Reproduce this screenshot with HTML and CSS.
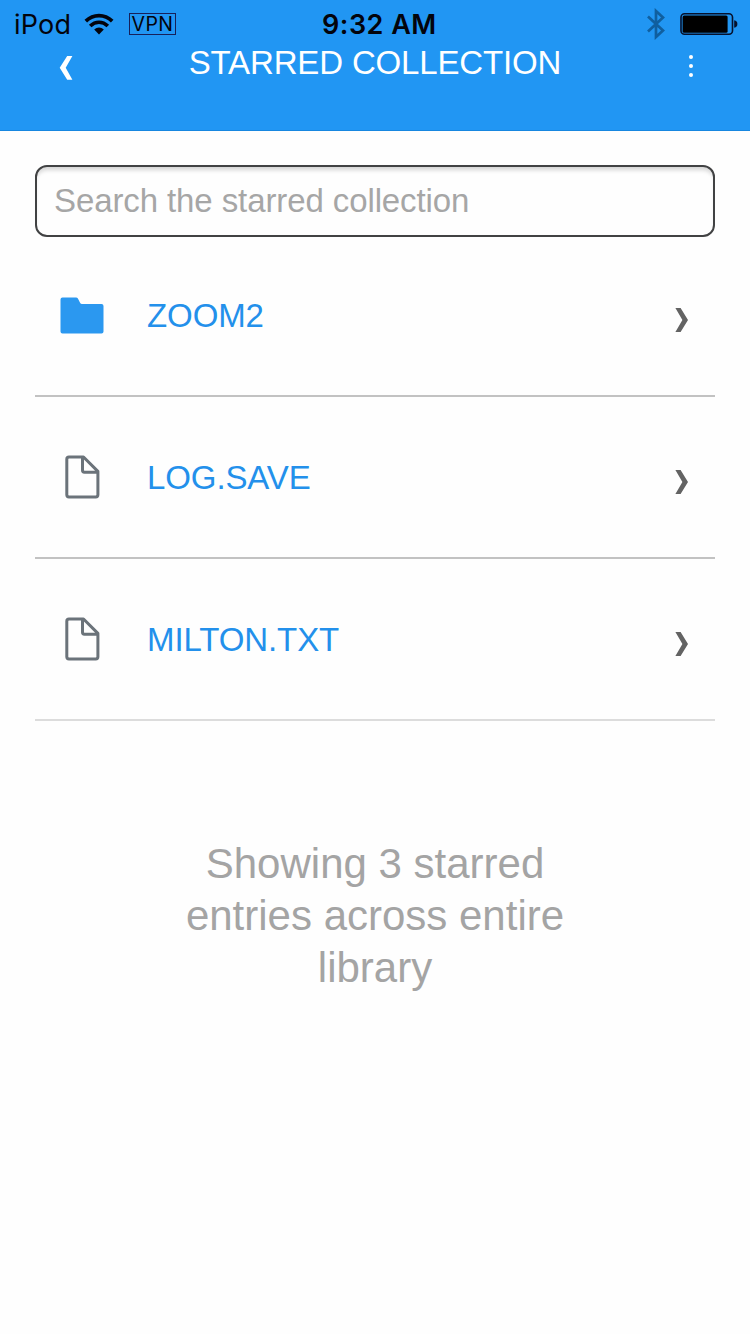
FILE: index.html
```html
<!DOCTYPE html>
<html lang="en">
<head>
<meta charset="utf-8">
<title>Starred Collection</title>
<link rel="stylesheet" href="styles.css">
</head>
<body>
<header class="header">
  <div class="status">
    <div class="status-left">
      <span class="carrier">iPod</span>
      <svg class="wifi" width="30" height="22" viewBox="0 0 30 22">
        <path d="M1.8 8.2C9.4.8 20.6.8 28.2 8.2" fill="none" stroke="#03040c" stroke-width="3.7"/>
        <path d="M6.2 13C11.4 8 18.6 8 23.8 13" fill="none" stroke="#03040c" stroke-width="3.7"/>
        <path d="M10.2 16.6C13 13.9 17 13.9 19.8 16.6L15 21.4Z" fill="#03040c"/>
      </svg>
      <span class="vpn">VPN</span>
    </div>
    <span class="time">9:32 AM</span>
    <div class="status-right">
      <svg class="bluetooth" width="18" height="32" viewBox="0 0 18 32">
        <path d="M1 8.5L16 22.5L9 29V3L16 9.5L1 23.5" fill="none" stroke="#105f9f" stroke-width="2.7"/>
      </svg>
      <svg class="battery" width="58" height="24" viewBox="0 0 58 24">
        <rect x="1" y="1.7" width="51.5" height="20.6" rx="3.5" fill="none" stroke="#06112c" stroke-width="1.6"/>
        <rect x="2.6" y="3.4" width="45" height="17.4" rx="1.5" fill="#000"/>
        <path d="M54.2 8.2Q57.4 8.8 57.4 12T54.2 15.8Z" fill="#06112c"/>
      </svg>
    </div>
  </div>
  <div class="titlebar">
    <svg class="back" width="14" height="26" viewBox="0 0 14 26"><path d="M8.2.9H13.4L6.7 12.7L13.4 24.7H8.2L.7 12.7Z" fill="#fff"/></svg>
    <h1 class="title">STARRED COLLECTION</h1>
    <svg class="more" width="6" height="24" viewBox="0 0 6 24" fill="#fff"><circle cx="3" cy="3" r="2"/><circle cx="3" cy="12" r="2"/><circle cx="3" cy="21" r="2"/></svg>
  </div>
</header>
<main class="content">
  <input class="search" type="text" placeholder="Search the starred collection">
  <ul class="entries">
    <li class="entry">
      <svg class="icon" width="48" height="48" viewBox="0 0 48 48"><path d="M4.5 5.5H18Q19.3 5.5 19.9 6.5L22.2 10.9Q22.8 12 24 12H43.5Q45.5 12 45.5 14V39.5Q45.5 41.5 43.5 41.5H4.5Q2.5 41.5 2.5 39.5V7.5Q2.5 5.5 4.5 5.5Z" fill="#2b98f0"/></svg>
      <span class="name">ZOOM2</span>
      <svg class="chevron" width="14" height="26" viewBox="0 0 14 26"><path d="M.4 1H5.6L13 13L5.6 25H.4L7.4 13Z" fill="#636363"/></svg>
    </li>
    <li class="entry">
      <svg class="icon" width="48" height="48" viewBox="0 0 48 48"><path d="M11 3H25.5L39.9 17.4V40.7Q39.9 42.9 37.7 42.9H11Q8.8 42.9 8.8 40.7V5.2Q8.8 3 11 3ZM24.5 3V16.3Q24.5 18.2 26.4 18.2H39.9" fill="none" stroke="#6b737a" stroke-width="3" stroke-linejoin="round"/></svg>
      <span class="name">LOG.SAVE</span>
      <svg class="chevron" width="14" height="26" viewBox="0 0 14 26"><path d="M.4 1H5.6L13 13L5.6 25H.4L7.4 13Z" fill="#636363"/></svg>
    </li>
    <li class="entry entry-last">
      <svg class="icon" width="48" height="48" viewBox="0 0 48 48"><path d="M11 3H25.5L39.9 17.4V40.7Q39.9 42.9 37.7 42.9H11Q8.8 42.9 8.8 40.7V5.2Q8.8 3 11 3ZM24.5 3V16.3Q24.5 18.2 26.4 18.2H39.9" fill="none" stroke="#6b737a" stroke-width="3" stroke-linejoin="round"/></svg>
      <span class="name">MILTON.TXT</span>
      <svg class="chevron" width="14" height="26" viewBox="0 0 14 26"><path d="M.4 1H5.6L13 13L5.6 25H.4L7.4 13Z" fill="#636363"/></svg>
    </li>
  </ul>
  <p class="summary">Showing 3 starred entries across entire library</p>
</main>
</body>
</html>
```
FILE: styles.css
```css
* { box-sizing: border-box; }
body {
  margin: 0;
  min-height: 1334px;
  background: #fefefe;
  font-family: "Liberation Sans", Arial, sans-serif;
}
svg { display: block; flex: none; }
.header {
  height: 131px;
  background: #2196f3;
  border-bottom: 1px solid #1787e0;
}
.status {
  height: 46px;
  padding: 0 12px 0 14px;
  display: grid;
  grid-template-columns: 308px 1fr auto;
  align-items: center;
  color: #03040c;
  font-family: Inter, sans-serif;
}
.status-left, .status-right { display: flex; align-items: center; }
.carrier { width: 57px; margin-right: 13px; font-size: 27px; letter-spacing: 0.2px; line-height: 46px; padding-top: 2px; }
.vpn {
  width: 47px;
  height: 22px;
  margin-left: 15px;
  border: 1.5px solid #17205a;
  font-size: 19.5px;
  line-height: 20px;
  letter-spacing: 0.5px;
  text-align: center;
}
.time { font-size: 27px; font-weight: 600; line-height: 46px; letter-spacing: 0.5px; padding-top: 2px; }
.bluetooth { margin-right: 15px; }
.titlebar {
  display: grid;
  grid-template-columns: 14px 1fr 6px;
  align-items: start;
  padding: 0 56px 0 59px;
}
.back { margin-top: 9px; }
.more { margin-top: 8px; }
.title {
  margin: -2px 11px 0 0;
  color: #fff;
  font-size: 33px;
  line-height: 38px;
  font-weight: 400;
  letter-spacing: -0.15px;
  text-align: center;
  white-space: nowrap;
}
.content { padding: 34px 35px 0; }
.search {
  display: block;
  width: 680px;
  height: 72px;
  padding: 0 17px;
  border: 2px solid #414243;
  border-radius: 12px;
  background: #fefefe;
  box-shadow: inset 0 5px 4px -2px #d4d4d4;
  font: 33px "Liberation Sans", Arial, sans-serif;
  letter-spacing: -0.1px;
}
.search::placeholder { color: #a6a6a6; opacity: 1; }
.entries { margin: -2px 0 0; padding: 0; list-style: none; }
.entry {
  height: 162px;
  padding: 1px 26px 0 23px;
  border-bottom: 2px solid #c2c2c2;
  display: flex;
  align-items: center;
}
.entry-last { border-color: #dcdcdc; }
.name { flex: 1; margin-left: 41px; color: #2390eb; font-size: 33px; line-height: 40px; letter-spacing: -0.1px; }
.chevron { margin-top: 8px; }
.summary {
  width: 400px;
  margin: 117px auto 0;
  color: #a4a4a4;
  font-size: 42px;
  line-height: 52px;
  text-align: center;
}
```
